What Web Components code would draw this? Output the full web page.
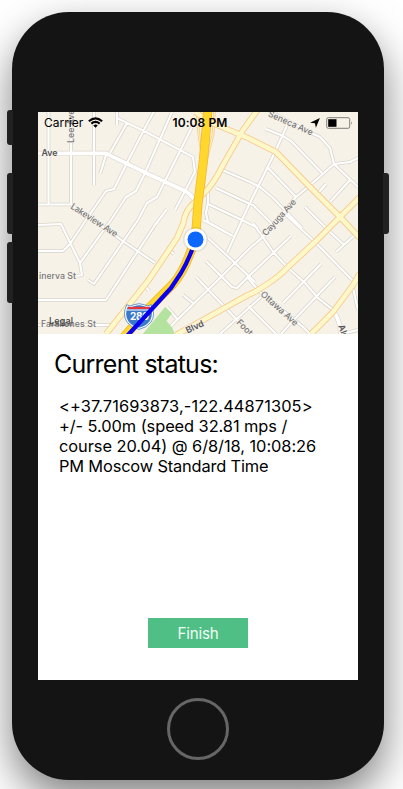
<!DOCTYPE html>
<html lang="en">
<head>
<meta charset="utf-8">
<title>Current status</title>
<style>
html,body{margin:0;height:789px;overflow:hidden;background:#fff;font-family:Inter,"Liberation Sans",sans-serif}
.l1{letter-spacing:.1px}.l2{letter-spacing:-.07px}.l3{letter-spacing:-.06px}.l4{letter-spacing:-.17px}
</style>
</head>
<body>
<phone-frame>
  <phone-screen>
    <route-map slot="map"><status-bar></status-bar></route-map>
    <status-panel>
      <span slot="title">Current status:</span>
      <span slot="detail"><span class="l1">&lt;+37.71693873,-122.44871305&gt;</span><br><span class="l2">+/- 5.00m (speed 32.81 mps /</span><br><span class="l3">course 20.04) @ 6/8/18, 10:08:26</span><br><span class="l4">PM Moscow Standard Time</span></span>
      <finish-button slot="action">Finish</finish-button>
    </status-panel>
  </phone-screen>
</phone-frame>
<script>
const define = (name, html) => customElements.define(name, class extends HTMLElement {
  constructor() {
    super();
    this.attachShadow({mode: 'open'}).innerHTML = html;
  }
});

define('phone-frame', `
<style>
:host{display:block;box-sizing:border-box;width:403px;height:789px;padding:12px 0 0 12px;overflow:hidden}
.body{position:relative;box-sizing:border-box;width:372px;height:768px;padding:100px 26px 0}
.shell{position:absolute;inset:0;border-radius:57px;background:#141414;box-shadow:0 18px 42px rgba(0,0,0,.5)}
.key{position:absolute;width:6px;background:#212121}
.l{left:-5px;border-radius:3px 0 0 3px}
.r{right:-5px;border-radius:0 3px 3px 0}
.content{position:relative;display:flex;flex-direction:column;align-items:center}
.home{box-sizing:border-box;width:62px;height:62px;margin-top:18px;border:3px solid #666;border-radius:50%}
</style>
<div class="body">
  <div class="shell"></div>
  <i class="key l" style="top:98px;height:35px"></i>
  <i class="key l" style="top:161px;height:61px"></i>
  <i class="key l" style="top:230px;height:61px"></i>
  <i class="key r" style="top:161px;height:61px"></i>
  <div class="content"><slot></slot><div class="home"></div></div>
</div>`);

define('phone-screen', `
<style>:host{display:flex;flex-direction:column;width:320px;height:568px;background:#fff;overflow:hidden}</style>
<slot name="map"></slot><slot></slot>`);

define('status-bar', `
<style>
:host{display:block;height:20px;color:#000;font-size:12px}
.bar{display:grid;grid-template-columns:1fr auto 1fr;align-items:center;height:20px;padding:1px 5px 0 6px;line-height:20px}
.left{display:flex;align-items:center;gap:5px;letter-spacing:-.02px}
.time{font-weight:600;font-size:12px;letter-spacing:.1px;margin-left:3px}
.right{display:flex;align-items:center;justify-content:flex-end;gap:6px;margin-top:-1px}
svg{display:block}
.left svg{margin-top:-1px}
</style>
<div class="bar">
 <div class="left"><span>Carrier</span>
  <svg width="15" height="11" viewBox="0 0 14 10"><path d="M.8 3.8Q7-1.6 13.2 3.8M3.1 6.1Q7 2.8 10.9 6.1" fill="none" stroke="#000" stroke-width="2"/><path d="M4.9 7.7Q7 6 9.1 7.7L7 9.9Z"/></svg></div>
 <div class="time">10:08 PM</div>
 <div class="right">
  <svg width="10" height="10" viewBox="0 0 10 10"><path d="M9.9.1 5.9 9.8 4.9 5.3.1 4.7Z"/></svg>
  <svg width="27" height="12" viewBox="0 0 27 12"><rect x=".7" y=".7" width="23" height="10.6" rx="1.6" fill="none" stroke="#807e79"/><rect x="2.2" y="2.2" width="8.3" height="7.6"/><path d="M25.2 4.2q1.6 1.8 0 3.6Z" fill="#807e79"/></svg>
 </div>
</div>`);

const streets = `
M48.5 110V205 M71 110V204 M94 110V185 M38 204.5H71L120 239L155 263
M100.3 173.5L106 155 M110 153L127 123 M117 110V125 M117 118L148 133L193 157L195 172L175 210
M155 110L148 122L127 163L114 189L106 191L86 220L70 244L63 251H38
M172 112L145 173L136 191L126 197L111 220L80 263
M192 127L157 197L147 203L138 220L94 284L88 280
M167 209L155 225L106 300H38 M38 225L61 224L80 263L82 275L77 276 M38 325H112
M168 249L174 254 M143 283L149 291
M222 170L250 182L260 187L273 198L302 228 M216 188L250 204L253 205L273 225
M222 170L208 190V203L206 213L208 222L233 236 M208 204L242 220L258 228 M242 220L227 253
M203 220L233 236
M208 238L235 263L255 282 M206 261L232 287L237 288L250 275L291 236 M196 277L240 323
M183 295L193 303 M167 307L178 320 M169 328L177 320L220 278L250 248L263 237L296 197L308 187L334 164
M220 334L250 307L261 297
M266 129L283 136L291 141L322 173 M288 123L276 150L248 207L241 222
M258 105L311 133L320 137L330 148L334 164L358 187 M334 164L350 162L360 157
M326 184L318 193 M350 180L330 202 M268 168L296 197
M305 207L328 230L344 245 M336 252L358 232
M253 223L274 253L288 268L305 283L318 298L333 310 M285 214L315 242L355 283
M321 264L283 303 M335 277L291 323L281 334 M248 306L276 334 M248 278L260 292L303 327L310 334
M353 288L358 310 M341 334L358 330`;
const avenue = 'M36 153.3H106L148 174L184 190.5Q191 194 195 201 M333 311Q339 317 341 334';
const majors = `M195 112L210 122L248 138L276 152L308 185L340 217L360 238
M360 197L340 217L315 242L288 267Q280 276 266 285Q252 294 248 295L176 335
M311 334L333 312L353 285L360 273
M106 334L148 281L177 238L183 224Q185 210 195 202L205 192Q213 185 223 165L243 130L259 108`;
const highway = 'M208 108L203.5 160L198 203L195.5 238Q185 271 173 284L147 310L124 337';

define('route-map', `
<style>
:host{display:block;position:relative;flex:none;width:320px;height:222px;overflow:hidden;background:#f6f2e8}
svg{display:block}
.bar{position:absolute;inset:0 0 auto}
path{fill:none;stroke-linejoin:round}
text{font:500 8.8px Inter,"Liberation Sans",sans-serif;fill:#77777b;stroke:#f6f2e8;stroke-width:1.6px;paint-order:stroke;stroke-linejoin:round}
.b{font-weight:600;fill:#56565a}
</style>
<svg width="320" height="222" viewBox="38 112 320 222">
 <path d="${streets}" stroke="#d9d4cb" stroke-width="3.6"/>
 <path d="${avenue}" stroke="#dcd7cd" stroke-width="5"/>
 <path d="${streets}" stroke="#fff" stroke-width="2.1"/>
 <path d="${avenue}" stroke="#fff" stroke-width="3.7"/>
 <path d="M142 335L165 307L172 313L166.500 321L172.500 328L175 335Z" style="fill:#b4e3a0"/>
 <path d="M197 114Q199 140 202 154M214.5 110L213 135L206 161L203 193" stroke="#f4ca83" stroke-width="2.6"/>
 <path d="M197 114Q199 140 202 154M214.5 110L213 135L206 161L203 193" stroke="#fbefc4" stroke-width="1.2"/>
 <path d="${majors}" stroke="#f8c98c" stroke-width="6.2"/>
 <path d="${majors}" stroke="#fdf8ca" stroke-width="4.5"/>
 <path d="${highway}" stroke="#f5b32c" stroke-width="9.2"/>
 <path d="${highway}" stroke="#ffd72d" stroke-width="7.8"/>
 <text transform="translate(74 143) rotate(-90)">Lee Ave</text>
 <text class="b" x="41.5" y="156">Ave</text>
 <text transform="translate(70 208) rotate(33)" textLength="54">Lakeview Ave</text>
 <text x="39" y="279" textLength="37">inerva St</text>
 <text x="41" y="327" textLength="55">Farallones St</text>
 <text transform="translate(267.5 116) rotate(24)" textLength="48">Seneca Ave</text>
 <text transform="translate(266 236.5) rotate(-48)" textLength="46">Cayuga Ave</text>
 <text transform="translate(260 295) rotate(42)" textLength="47">Ottawa Ave</text>
 <text class="b" transform="translate(187.5 333.5) rotate(-25)">Blvd</text>
 <text transform="translate(236 323) rotate(45)">Foote Ave</text>
 <text class="b" transform="translate(338 326) rotate(68)">Alemany</text>
 <path d="M127.500 305.500Q131 307.500 134 305.500Q139 303.500 144 305.500Q147 307.500 150.500 305.500Q155 315 150 322Q146 327 139 328.500Q132 327 128 322Q123 315 127.500 305.500Z" style="fill:#3b78c8;stroke:#fff;stroke-width:1.4"/>
 <path d="M127.500 305.500Q131 307.500 134 305.500Q139 303.500 144 305.500Q147 307.500 150.500 305.500Q155 315 150 322Q146 327 139 328.500Q132 327 128 322Q123 315 127.500 305.500Z" style="stroke:#3b78c8;stroke-width:.7" transform="translate(139 316) scale(1.07) translate(-139 -316)"/>
 <path d="M128 308H150" stroke="#e3363d" stroke-width="2.4"/><path d="M126.5 310H151.5" stroke="#fff" stroke-width="1"/>
 <text x="130" y="320" style="font-size:10px;font-weight:700;fill:#fff;stroke:none" textLength="19">280</text>
 <text x="49" y="323.5" style="font-size:9px;fill:#444;stroke:none" textLength="24">Legal</text>
 <path d="M49 325H73" stroke="#444" stroke-width=".8"/>
 <path d="M195 240L192 250Q187 263 181 273L171 288L140 322L127 336" stroke="#0800ee" stroke-width="4.2"/>
 <circle cx="195.5" cy="239.5" r="12.5" fill="#000" opacity=".08"/>
 <circle cx="195.5" cy="239.5" r="11" fill="#fff"/><circle cx="195.5" cy="239.5" r="8" fill="#0b68fb"/>
</svg>
<div class="bar"><slot></slot></div>`);

define('status-panel', `
<style>
:host{display:flex;flex-direction:column;flex:1;box-sizing:border-box;padding:14px 16px 32px;color:#000}
h1{margin:0;font-weight:400;font-size:25px;line-height:32px;letter-spacing:-.75px;white-space:nowrap}
p{margin:15.5px 0 0 5px;font-size:16.4px;line-height:20.3px;white-space:nowrap}
footer{margin-top:auto;display:flex;justify-content:center}
</style>
<h1><slot name="title"></slot></h1><p><slot name="detail"></slot></p><footer><slot name="action"></slot></footer>`);

define('finish-button', `
<style>
:host{display:block}
button{display:block;box-sizing:border-box;width:100px;height:30px;padding:1px 0 0;border:0;background:#4fbf85;color:#effaf4;font:400 15.2px/29px Inter,"Liberation Sans",sans-serif;letter-spacing:-.25px}
</style>
<button><slot></slot></button>`);
</script>
</body>
</html>
